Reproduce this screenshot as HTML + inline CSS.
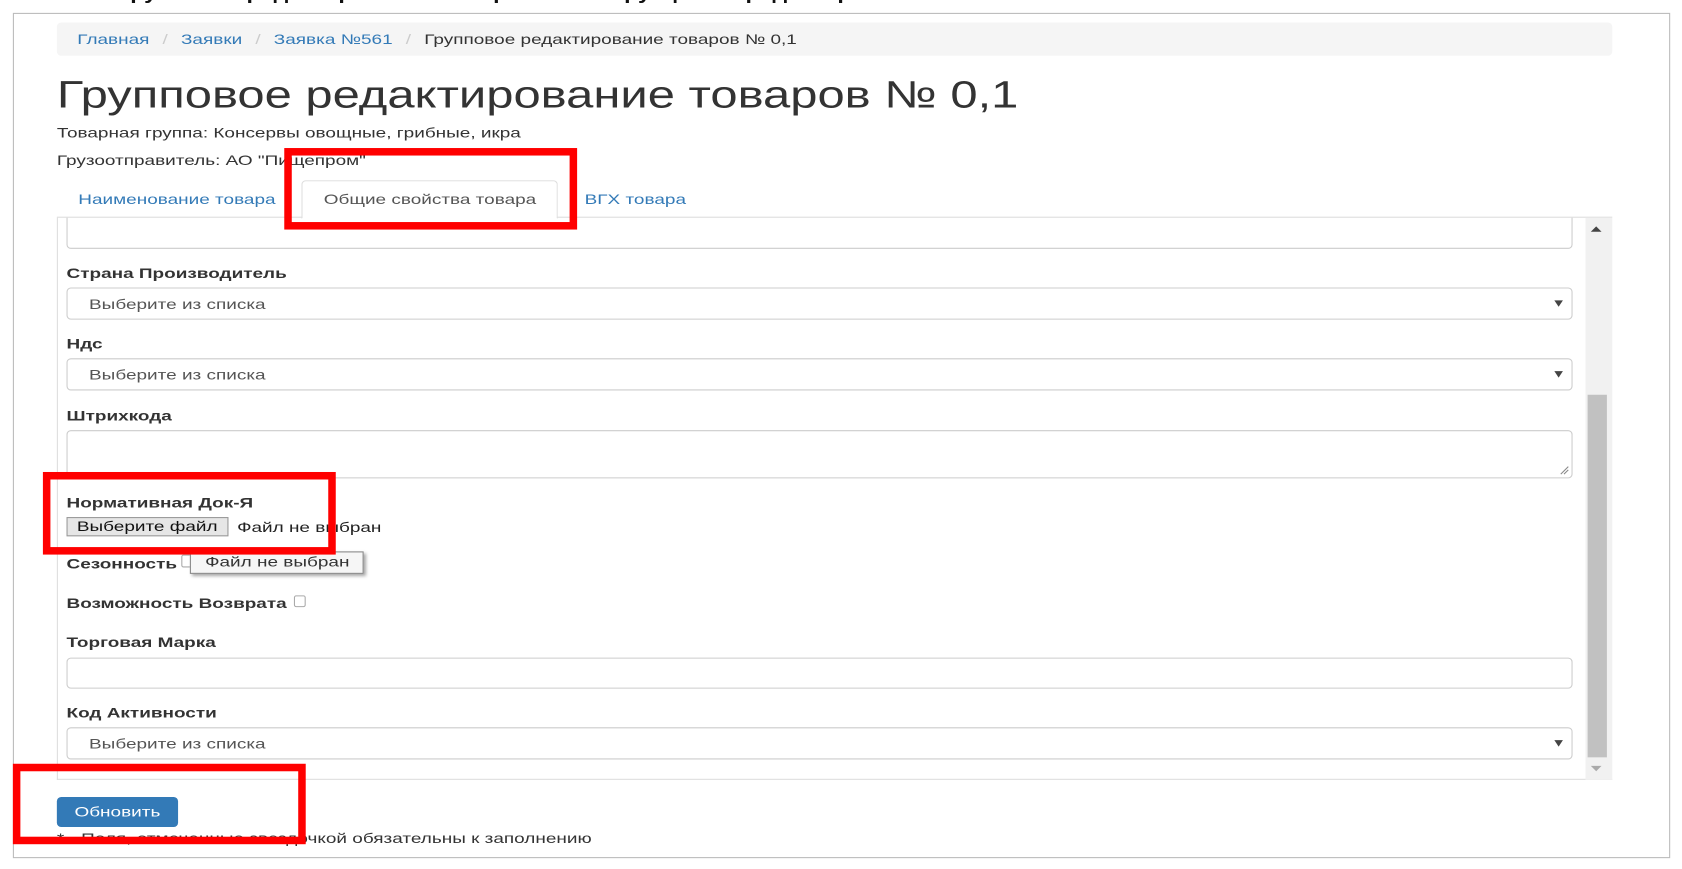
<!DOCTYPE html>
<html><head><meta charset="utf-8"><style>
html,body{margin:0;padding:0;background:#fff;overflow:hidden;width:1682px;height:869px}
#w{position:absolute;left:0;top:0;width:1568px;height:810px;transform:scale(1.0727);transform-origin:0 0;font-family:"Liberation Sans","DejaVu Sans",sans-serif;color:#333}
.a{position:absolute}
.x{display:inline-block;transform:scaleX(1.36);transform-origin:0 50%;white-space:nowrap}
.xc{display:inline-block;transform:scaleX(1.36);transform-origin:50% 50%;white-space:nowrap}
.frame{left:12px;top:12px;width:1545px;height:788px;border:1px solid #bbb;box-sizing:border-box}
.bc{left:53px;top:21px;width:1450px;height:31px;background:#f5f5f5;border-radius:4px;font-size:13px;line-height:31px;padding-left:19px;box-sizing:border-box}
.bc a{color:#337ab7}.bc s{text-decoration:none;color:#ccc;padding:0 9px}
h1{position:absolute;left:53px;top:68px;margin:0;font-weight:normal;font-size:35.5px;line-height:40px;color:#333}
.sm{font-size:13px}
.lbl{position:absolute;left:62px;font-size:13px;font-weight:bold;color:#333}
.inp{position:absolute;left:62px;width:1404px;border:1px solid #ccc;border-radius:4px;box-sizing:border-box;background:#fff}
.sel{font-size:13px;color:#555;padding-left:20px;box-sizing:border-box}
.arr{position:absolute;right:8px;top:50%;margin-top:-3px;border-left:4px solid transparent;border-right:4px solid transparent;border-top:6px solid #444}
.red{position:absolute;border:7px solid #f00;box-sizing:border-box}
</style></head><body><div id="w">
<div class="a" style="left:110px;top:-17px;font-size:18px;font-weight:bold;color:#111;white-space:nowrap"><span class="x" style="transform:scaleX(1.2)">Групповое редактирование товаров — инструкция по редактированию свойств</span></div>
<div class="a frame"></div>
<div class="a bc"><span class="x"><a>Главная</a><s>/</s><a>Заявки</a><s>/</s><a>Заявка №561</a><s>/</s>Групповое редактирование товаров № 0,1</span></div>
<h1><span class="x" style="transform:scaleX(1.285)">Групповое редактирование товаров № 0,1</span></h1>
<div class="a sm" style="left:53px;top:116px"><span class="x">Товарная группа: Консервы овощные, грибные, икра</span></div>
<div class="a sm" style="left:53px;top:142px"><span class="x">Грузоотправитель: АО "Пищепром"</span></div>
<div class="a" style="left:53px;top:202px;width:1450px;border-top:1px solid #ddd"></div>
<div class="a sm" style="left:73px;top:178px;color:#337ab7"><span class="x">Наименование товара</span></div>
<div class="a" style="left:281px;top:168px;width:239px;height:36px;border:1px solid #ddd;border-bottom:1px solid #fff;border-radius:4px 4px 0 0;background:#fff;box-sizing:border-box;font-size:13px;text-align:center;line-height:34px;color:#555"><span class="xc">Общие свойства товара</span></div>
<div class="a sm" style="left:545px;top:178px;color:#337ab7"><span class="x">ВГХ товара</span></div>
<div class="a" style="left:53px;top:203px;width:1450px;height:524px;border-left:1px solid #ddd;border-bottom:1px solid #ddd;box-sizing:border-box;overflow:hidden">
<div class="a" style="left:8px;top:-10px;width:1404px;height:39px;border:1px solid #ccc;border-radius:4px;box-sizing:border-box"></div>
</div>
<div class="a" style="left:1478px;top:203px;width:25px;height:524px;background:#f1f1f1"></div>
<div class="a" style="left:1480px;top:368px;width:18px;height:338px;background:#c1c1c1"></div>
<div class="a" style="left:1483px;top:211px;border-left:5px solid transparent;border-right:5px solid transparent;border-bottom:5px solid #444"></div>
<div class="a" style="left:1483px;top:714px;border-left:5px solid transparent;border-right:5px solid transparent;border-top:5px solid #aaa"></div>
<div class="lbl" style="top:247px"><span class="x">Страна Производитель</span></div>
<div class="inp sel" style="top:268px;height:30px;line-height:29px"><span class="x">Выберите из списка</span><div class="arr"></div></div>
<div class="lbl" style="top:313px"><span class="x">Ндс</span></div>
<div class="inp sel" style="top:334px;height:30px;line-height:29px"><span class="x">Выберите из списка</span><div class="arr"></div></div>
<div class="lbl" style="top:380px"><span class="x">Штрихкода</span></div>
<div class="inp" style="top:401px;height:45px"><svg class="a" style="right:2px;bottom:2px" width="9" height="9"><path d="M1 8L8 1M4 8L8 4" stroke="#888" stroke-width="1"/></svg></div>
<div class="lbl" style="top:461px"><span class="x">Нормативная Док-Я</span></div>
<div class="a" style="left:62px;top:482px;width:151px;height:18px;border:1px solid #999;background:#e6e6e6;box-sizing:border-box;font-size:13px;text-align:center;line-height:16px;color:#111"><span class="xc">Выберите файл</span></div>
<div class="a sm" style="left:221px;top:484px;color:#222"><span class="x">Файл не выбран</span></div>
<div class="lbl" style="top:518px"><span class="x">Сезонность</span></div>
<div class="a" style="left:169px;top:517px;width:10px;height:10px;border:1px solid #aaa;border-radius:2px"></div>
<div class="a" style="left:177px;top:514px;width:162px;height:21px;border:1px solid #888;background:#f6f6f6;box-shadow:2px 2px 3px rgba(0,0,0,.35);box-sizing:border-box;font-size:13px;text-align:center;line-height:18px;color:#333"><span class="xc">Файл не выбран</span></div>
<div class="lbl" style="top:555px"><span class="x">Возможность Возврата</span></div>
<div class="a" style="left:274px;top:555px;width:11px;height:11px;border:1px solid #aaa;border-radius:2px;box-sizing:border-box"></div>
<div class="lbl" style="top:591px"><span class="x">Торговая Марка</span></div>
<div class="inp" style="top:613px;height:29px"></div>
<div class="lbl" style="top:657px"><span class="x">Код Активности</span></div>
<div class="inp sel" style="top:678px;height:30px;line-height:29px"><span class="x">Выберите из списка</span><div class="arr"></div></div>
<div class="a" style="left:53px;top:743px;width:113px;height:28px;background:#337ab7;border-radius:4px;color:#fff;font-size:13px;text-align:center;line-height:28px"><span class="xc">Обновить</span></div>
<div class="a sm" style="left:53px;top:774px"><span class="x">* - Поля, отмеченные звездочкой обязательны к заполнению</span></div>
<div class="red" style="left:265px;top:138px;width:273px;height:76px"></div>
<div class="red" style="left:40px;top:440px;width:273px;height:77px"></div>
<div class="red" style="left:12px;top:712px;width:273px;height:75px"></div>
</div></body></html>
